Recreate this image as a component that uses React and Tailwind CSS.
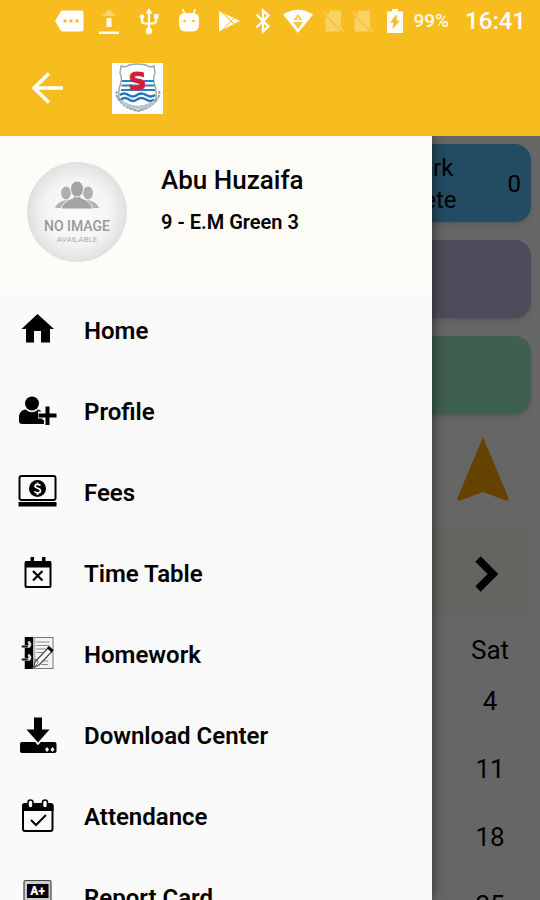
import React, { useState } from 'react';

const HomeIcon = () => (
  <svg viewBox="0 0 40 40" className="size-10" fill="#000">
    <path d="M19.500 4 36 19h-4v13.500h-9V21h-7v11.500H8V19H3.500z" />
  </svg>
);

const ProfileIcon = () => (
  <svg viewBox="0 0 40 40" className="size-10">
    <circle cx="14" cy="12.500" r="7" />
    <path d="M8 18.500c3 3.500 9 3.500 12 0 3 .5 4.500 3 4.500 6V33H4c-2 0-3-1-3-3v-4c0-4 3-7.500 7-7.500z" />
    <path d="M29.500 14.500v19M20 24h18.500" stroke="#fafafa" strokeWidth="7" fill="none" />
    <path d="M18 29h8v4h-8z" />
    <path d="M29.500 15.500v18.500M20.500 24.500h18" stroke="#000" strokeWidth="4" fill="none" />
  </svg>
);

const FeesIcon = () => (
  <svg viewBox="0 0 40 40" className="size-10">
    <rect x="1.500" y="4" width="36" height="24" rx="2" fill="none" stroke="#000" strokeWidth="2" />
    <path d="M.5 30h38v4.500H.5z" />
    <circle cx="19.500" cy="16.500" r="8.500" />
    <path d="M22.500 13.500c-1-1.500-5.500-2-5.500.8 0 2.500 5.500 1.500 5.500 4.400 0 3-5 2.600-6 .6M19.500 10.500v2M19.500 21v2" fill="none" stroke="#fff" strokeWidth="1.700" />
  </svg>
);

const TimeTableIcon = () => (
  <svg viewBox="0 0 40 40" className="size-10">
    <rect x="7.500" y="9" width="25" height="25" rx="1" fill="none" stroke="#000" strokeWidth="2" />
    <path d="M7 8h26v6.500H7zM12.500 4H16v5h-3.500zM24 4h3.500v5H24z" />
    <path d="m15 18 9.500 9.500M24.500 18 15 27.500" stroke="#000" strokeWidth="2.200" />
  </svg>
);

const HomeworkIcon = () => (
  <svg viewBox="0 0 40 40" className="size-10">
    <rect x="7" y="3.500" width="28" height="31" fill="#f4f4f4" stroke="#777" strokeWidth="1" />
    <path d="M7 3h8v32H7z" />
    <path d="M15 3.500h2.500V34H15z" fill="#bbb" />
    <path d="M18.500 8h13M18.500 11.500h13M18.500 15h10M18.500 18.500h8M25 27h5M23 30.500h7" stroke="#888" strokeWidth="1.200" />
    <path d="M17 28 30 14l4 3.500L21 31l-5.500 2.500z" fill="#fff" stroke="#444" strokeWidth="1.200" />
    <path d="m29 14 2-2 4.500 4-2 2.500z" />
    <path d="M16 26c3-1 5 1 3.500 3.500S16 32 14 34.500" fill="none" stroke="#666" strokeWidth="1" />
    <g fill="none" strokeLinecap="round">
      <path d="M5 12.500h6q2-2 0-4M5 25.500h6q2-2 0-4" stroke="#ddd" strokeWidth="2.600" />
      <path d="M4.500 12.500H9M4.500 25.500H9" stroke="#222" strokeWidth="2" />
    </g>
  </svg>
);

const DownloadIcon = () => (
  <svg viewBox="0 0 40 40" className="size-10">
    <path d="M4 27h32.500a2 2 0 0 1 2 2v7a2 2 0 0 1-2 2H4a2 2 0 0 1-2-2v-7a2 2 0 0 1 2-2z" />
    <path d="M16 2h8v12.500h8L20 28 8 14.500h8z" stroke="#fafafa" strokeWidth="3" />
    <path d="M16 2.500h8v12h7.500L20 27.500 8.500 14.500H16z" />
    <path d="m27 34.500 2-2.500 2 2.500-2 2.500zM32.500 34.500l2-2.500 2 2.500-2 2.500z" fill="#fff" />
  </svg>
);

const AttendanceIcon = () => (
  <svg viewBox="0 0 40 40" className="size-10">
    <rect x="5" y="8" width="29.500" height="27" rx="2" fill="none" stroke="#000" strokeWidth="2" />
    <path d="M4 9.500q0-2 2-2h27.500q2 0 2 2V15H4z" />
    <rect x="10" y="4" width="5" height="8" rx="2.500" fill="#fff" stroke="#000" strokeWidth="1.600" />
    <rect x="24.500" y="4" width="5" height="8" rx="2.500" fill="#fff" stroke="#000" strokeWidth="1.600" />
    <path d="m13 24 5 5 10-10" fill="none" stroke="#000" strokeWidth="2" />
  </svg>
);

const ReportIcon = () => (
  <svg viewBox="0 0 40 40" className="size-10">
    <rect x="6" y="3.500" width="27" height="36" rx="1.500" fill="#ccc" stroke="#444" strokeWidth="1.200" />
    <path d="M9 7h21.500v14H9zM9 23h21.500v16H9z" />
    <text x="19.500" y="18" textAnchor="middle" fontSize="12" fontWeight="900" fill="#fff" fontFamily="Roboto, sans-serif">A+</text>
  </svg>
);

const menuItems = [
  { label: 'Home', Icon: HomeIcon },
  { label: 'Profile', Icon: ProfileIcon },
  { label: 'Fees', Icon: FeesIcon },
  { label: 'Time Table', Icon: TimeTableIcon },
  { label: 'Homework', Icon: HomeworkIcon },
  { label: 'Download Center', Icon: DownloadIcon },
  { label: 'Attendance', Icon: AttendanceIcon },
  { label: 'Report Card', Icon: ReportIcon },
];

const saturdays = [4, 11, 18, 25];

const SimOff = () => (
  <svg viewBox="0 0 24 24" className="size-6" fill="#fff">
    <path d="M8.500 1.500H20v18L7 6z" opacity=".32" />
    <path d="M4.500 7 19 21.500v1H4.500z" opacity=".32" />
    <path d="m2.500 2.500 20 20" stroke="#fff" strokeWidth="1.400" opacity=".3" />
  </svg>
);

const StatusBar = () => (
  <div className="flex h-[42px] items-center justify-end pr-[14px] text-white">
    <div className="flex w-10 justify-center">
      {/* Message tag */}
      <svg viewBox="0 0 30 24" className="h-6 w-[30px]">
        <path d="M9 1.500h18.500q2 0 2 2v17q0 2-2 2H9q-1.500 0-2.500-1.500L1 12l5.500-9q1-1.500 2.500-1.500z" fill="#fff" />
        <g fill="#f7bd1e"><circle cx="11" cy="12" r="1.700" /><circle cx="17" cy="12" r="1.700" /><circle cx="23" cy="12" r="1.700" /></g>
      </svg>
    </div>
    <div className="flex w-10 justify-center">
      {/* Upload */}
      <svg viewBox="0 0 24 28" className="h-7 w-6" fill="#fff">
        <path d="m12 2 7 7H5z" opacity=".35" />
        <path d="M9.500 11h5v9h-5z" opacity=".9" />
        <path d="M2 24.500h20V27H2z" />
      </svg>
    </div>
    <div className="flex w-10 justify-center">
      {/* USB */}
      <svg viewBox="0 0 24 28" className="h-7 w-6">
        <path d="M12 5v19M5 9v4.500q0 3 3 3h8q3 0 3-3V9" fill="none" stroke="#fff" strokeWidth="2.200" />
        <path d="m12 1 3.500 5.500h-7z" fill="#fff" />
        <circle cx="5" cy="9.500" r="2.300" fill="#fff" />
        <path d="M17 7h4.500v4.500H17z" fill="#fff" />
        <circle cx="12" cy="24" r="3.200" fill="#fff" />
      </svg>
    </div>
    <div className="flex w-10 justify-center">
      {/* Android head */}
      <svg viewBox="0 0 24 28" className="h-7 w-6">
        <path d="m5.500 2 3 6M18.500 2l-3 6" stroke="#fff" strokeWidth="1.600" />
        <path d="M2 12q0-6 6-6h8q6 0 6 6v5q0 7.500-7 7.500H9q-7 0-7-7.500z" fill="#fff" />
        <circle cx="7.500" cy="14" r="1.300" fill="#f7bd1e" />
        <circle cx="16.500" cy="14" r="1.300" fill="#f7bd1e" />
      </svg>
    </div>
    <div className="flex w-10 justify-center">
      {/* Play store */}
      <svg viewBox="0 0 24 24" className="size-6">
        <path d="M2 2v20.500L23 12z" fill="#fff" />
        <path d="m4 2 15 15M4 22.500 19 7" stroke="#f7bd1e" strokeWidth="1" />
      </svg>
    </div>
    <div className="flex w-7 justify-center">
      {/* Bluetooth */}
      <svg viewBox="0 0 18 26" className="h-[26px] w-[18px]">
        <path d="m2.500 6.500 12 12-5.500 5V2.500l5.500 5-12 12" fill="none" stroke="#fff" strokeWidth="2.400" />
      </svg>
    </div>
    <div className="flex w-[42px] justify-center">
      {/* Wifi */}
      <svg viewBox="0 0 30 24" className="h-6 w-[30px]">
        <path d="M0 5.500Q15-4 30 5.500L15 24z" fill="#fff" />
        <path d="m15 5 4.500 6h-9zM10 13h10l-5 7z" fill="#f7bd1e" opacity=".85" />
        <path d="M15 8v3" stroke="#fff" strokeWidth="1.500" />
      </svg>
    </div>
    <div className="flex w-[29px] justify-center"><SimOff /></div>
    <div className="flex w-[29px] justify-center"><SimOff /></div>
    <div className="flex w-[37px] justify-center">
      {/* Battery */}
      <svg viewBox="0 0 16 24" className="h-6 w-4">
        <path d="M5 0h6v2.500h5V24H0V2.500h5z" fill="#fff" />
        <path d="M10 5 3 13.500h3.500L5.500 20l7.500-8.500H9.500z" fill="#f7bd1e" />
      </svg>
    </div>
    <span className="text-[19px] font-medium opacity-90">99%</span>
    <span className="ml-4 text-2xl font-medium">16:41</span>
  </div>
);

const Crest = () => (
  <svg viewBox="0 0 51 51" className="size-[51px] bg-white">
    <path d="M9 3q5 2 8-1 8-2 17 0 3 3 8 1l1 7q-2 4-1 9 3 9 2 16-4 9-18 13Q12 44 7 35q-1-8 2-16 1-5-1-9z" fill="#fff" stroke="#93a9ad" strokeWidth="1.400" />
    <path d="M10 18h32M9.500 22.500h33M9 27h34" stroke="#2a7fc4" strokeWidth="2.200" />
    <path d="M8 32q4-3 8.500 0t8.500 0 9 0 9 0M9 36.500q4-3 8 0t8 0 9 0 8 0" fill="none" stroke="#1f74bd" strokeWidth="2.400" />
    <path d="M5 28q-2 5 3 9 7 6 18 7 11-1 17-7 6-4 4-9M6 35q5 10 20 13 14-3 20-13" fill="none" stroke="#8fa9ae" strokeWidth="2" strokeDasharray="3 1" />
    <path d="M9 38.500q8 6 17 6t17-6" fill="none" stroke="#b8c8ca" strokeWidth="3" />
    <text x="25.500" y="27" textAnchor="middle" fontSize="25" fontWeight="700" fontFamily="DejaVu Sans, sans-serif" fill="#d21f35" stroke="#d21f35" strokeWidth="1">S</text>
  </svg>
);

const Avatar = () => (
  <svg viewBox="0 0 100 100" className="size-[100px] shrink-0" role="img" aria-label="No image available">
    <defs>
      <radialGradient id="avatarFill">
        <stop offset="0" stopColor="#fcfcfc" />
        <stop offset=".65" stopColor="#f4f4f4" />
        <stop offset="1" stopColor="#e0e0e0" />
      </radialGradient>
    </defs>
    <circle cx="50" cy="50" r="50" fill="url(#avatarFill)" />
    <g fill="#b0b0b0">
      <ellipse cx="39" cy="31" rx="5" ry="6.500" />
      <ellipse cx="61" cy="31" rx="5" ry="6.500" />
      <path d="M28 46q2-6 11-8h22q9 2 11 8z" />
    </g>
    <g fill="#a3a3a3" stroke="#f5f5f5" strokeWidth="1">
      <path d="M34 47q2-8 12-11l1-4h6l1 4q10 3 12 11z" />
      <ellipse cx="50" cy="27" rx="6.500" ry="8" />
    </g>
    <text x="50" y="69" textAnchor="middle" fontSize="14" fill="#999" fontWeight="500" fontFamily="Roboto, sans-serif">NO IMAGE</text>
    <text x="50" y="80" textAnchor="middle" fontSize="8" fill="#aaa" fontFamily="Roboto, sans-serif">AVAILABLE</text>
  </svg>
);

const Dashboard = () => (
  <main className="h-full overflow-hidden bg-white text-black">
    <section className="flex flex-col gap-[18px] px-[9px] pt-2">
      <div className="flex h-[78px] items-center justify-end gap-[51px] rounded-2xl bg-[#58bbf2] pr-[10px] text-2xl shadow-md">
        <p className="pt-[2px] leading-8">Homework<br />Incomplete</p>
        <span className="pt-[2px]">0</span>
      </div>
      <div className="h-[78px] rounded-2xl bg-[#c8bce1] shadow-md" />
      <div className="h-[78px] rounded-2xl bg-[#9deec8] shadow-md" />
    </section>
    <div className="flex justify-end pt-[22px] pr-[30px]">
      <svg viewBox="0 0 54 66" className="h-[66px] w-[54px]">
        <path d="M27 1 53 63l-2 2-24-9-24 9-2-2z" fill="#ffa500" />
      </svg>
    </div>
    <section className="px-[11px] pt-7">
      <div className="flex h-[87px] items-center justify-end bg-[#fffaf3] pr-[30px]">
        <button aria-label="Next month">
          <svg viewBox="0 0 24 36" className="h-9 w-6">
            <path d="m3 3 15 15L3 33" fill="none" stroke="#000" strokeWidth="7.500" />
          </svg>
        </button>
      </div>
      {/* Saturday column */}
      <table className="ml-auto w-[78px] table-fixed text-center text-[26px]">
        <thead>
          <tr className="h-[59px]">
            <th className="pt-2 font-normal">Sat</th>
          </tr>
        </thead>
        <tbody>
          {saturdays.map((date) => (
            <tr key={date} className="h-[68px] align-top">
              <td className="pt-[6px]">{date}</td>
            </tr>
          ))}
        </tbody>
      </table>
    </section>
  </main>
);

const App = () => {
  const [isOpen, setIsOpen] = useState(true); // Drawer state

  return (
    <div className="flex h-screen flex-col overflow-hidden font-['Roboto',sans-serif]">
      <header className="shrink-0 bg-[#f7bd1e]">
        <StatusBar />
        <div className="flex h-[94px] items-center gap-12 pb-[2px] pl-8">
          <button onClick={() => setIsOpen(!isOpen)} aria-label="Back">
            <svg viewBox="0 0 32 32" className="size-8">
              <path d="M31 16H2M17 1.500 2 16l15 14.500" fill="none" stroke="#fff" strokeWidth="3.500" />
            </svg>
          </button>
          <Crest />
        </div>
      </header>

      <div className="relative min-h-0 flex-1 overflow-hidden">
        <Dashboard />
        {isOpen && (
          <>
            <div className="absolute inset-0 bg-black/60" onClick={() => setIsOpen(false)} />
            {/* Drawer */}
            <aside className="absolute inset-y-0 left-0 w-4/5 overflow-hidden bg-[#fafafa] text-black shadow-[0_0_12px_rgba(0,0,0,0.6)]">
              <div className="flex h-[153px] gap-[34px] bg-[#fdfcf7] pt-[26px] pl-[27px]">
                <Avatar />
                <div className="pt-[2px]">
                  <h1 className="text-[26px] leading-8 font-medium">Abu Huzaifa</h1>
                  <p className="mt-3 text-xl leading-7 font-semibold">9 - E.M Green 3</p>
                </div>
              </div>
              <nav>
                <ul>
                  {menuItems.map(({ label, Icon }) => (
                    <li key={label}>
                      <a href="#" className="flex h-[81px] items-center gap-[26px] pl-[18px] text-2xl font-semibold">
                        <Icon />
                        <span className="pt-[2px]">{label}</span>
                      </a>
                    </li>
                  ))}
                </ul>
              </nav>
            </aside>
          </>
        )}
      </div>
    </div>
  );
};

export default App;
